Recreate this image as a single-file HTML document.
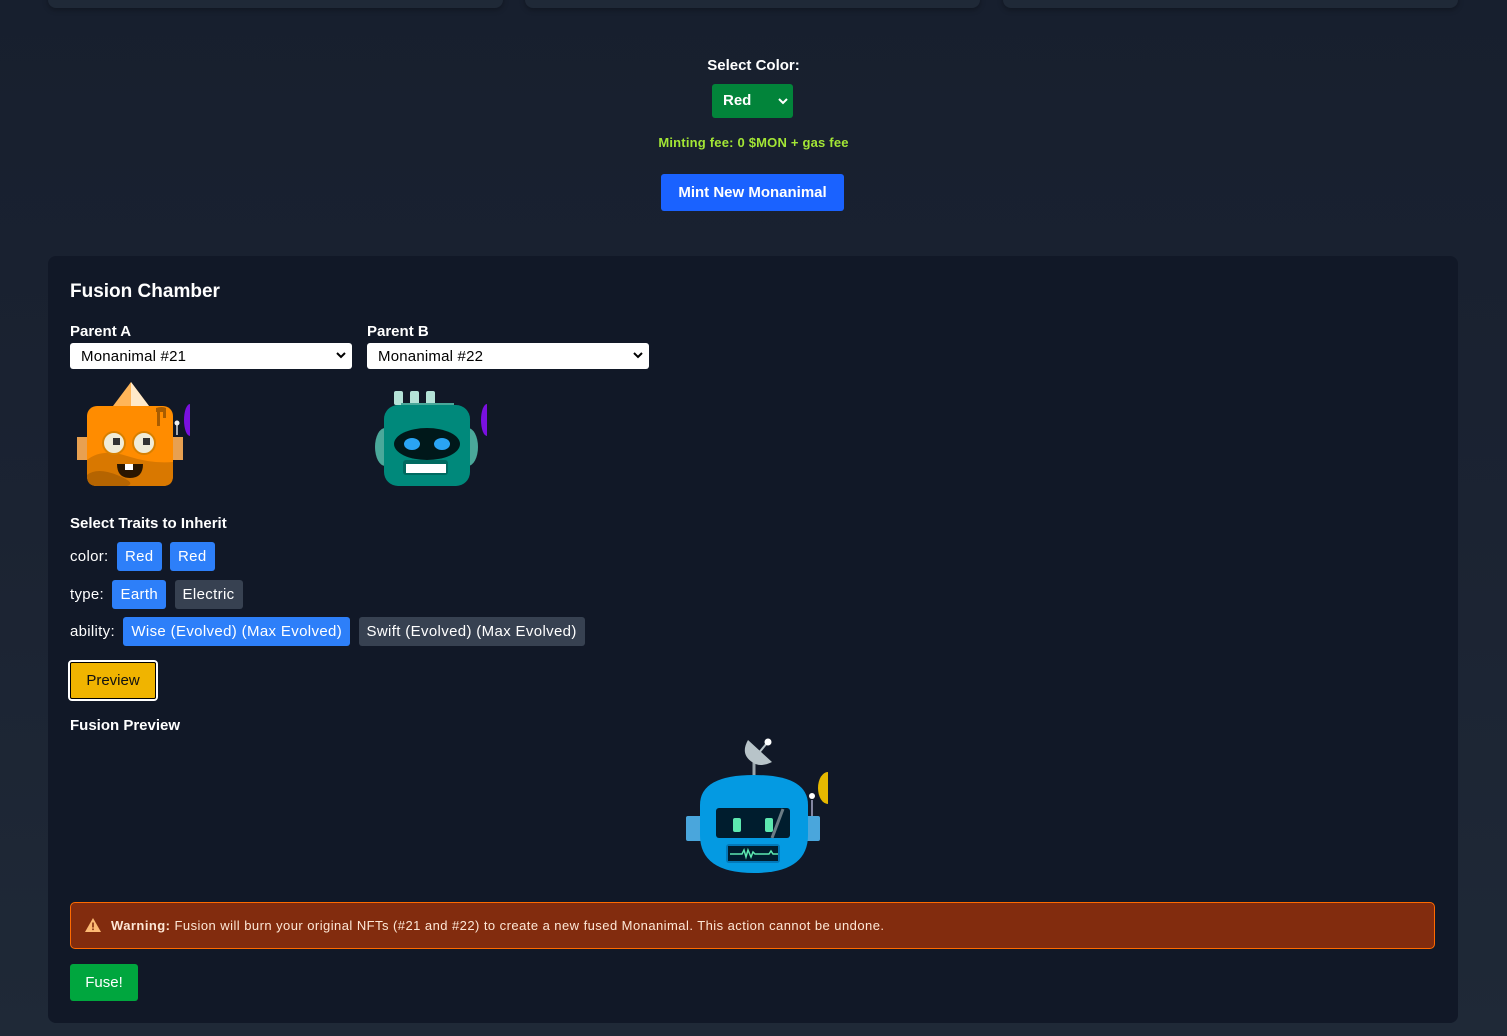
<!DOCTYPE html>
<html><head><meta charset="utf-8"><style>
*{box-sizing:border-box;margin:0;padding:0}
body{width:1507px;height:1036px;overflow:hidden;background:linear-gradient(#171f2e,#1b2332 50%,#1f2937);font-family:"Liberation Sans",Arial,sans-serif;color:#fff;position:relative}
.a{position:absolute}
.card{top:-10px;height:18px;width:455px;background:#1f2937;border-radius:8px;box-shadow:0 2px 6px rgba(0,0,0,.3)}
.panel{left:48px;top:256px;width:1410px;height:767px;background:#111827;border-radius:8px}
.sel{background:#fff;color:#000;border-radius:3px;height:26px;width:282px;font-size:15px;padding:4px 11px;line-height:19px;letter-spacing:.2px}
.sel svg{position:absolute;right:6px;top:9px}
.tag{height:29px;line-height:29px;padding:0 8px;border-radius:3px;font-size:15px;display:inline-block;letter-spacing:.35px}
.b{background:#2d7ff9}.g{background:#374151}
.lab{font-size:15px;line-height:29px;letter-spacing:.3px}
</style></head><body>
<div class="a card" style="left:48px"></div>
<div class="a card" style="left:525px"></div>
<div class="a card" style="left:1003px"></div>

<div class="a" style="left:0;width:1507px;top:57px;text-align:center;font-weight:bold;font-size:15px">Select Color:</div>
<div class="a" style="left:712px;top:84px;width:81px;height:34px;background:#02843a;border-radius:3px;font-weight:bold;font-size:15px;line-height:34px;padding-left:11px">Red<svg class="a" style="right:5px;top:14px" width="10" height="7" viewBox="0 0 10 7"><path d="M1 1l4 4 4-4" stroke="#fff" stroke-width="2" fill="none"/></svg></div>
<div class="a" style="left:0;width:1507px;top:135px;text-align:center;font-weight:bold;font-size:13px;color:#a3e635;letter-spacing:.2px">Minting fee: 0 $MON + gas fee</div>
<div class="a" style="left:661px;top:174px;width:183px;height:37px;background:#1a62ff;border-radius:3px;font-weight:bold;font-size:15px;line-height:37px;text-align:center">Mint New Monanimal</div>

<div class="a panel"></div>
<div class="a" style="left:70px;top:281px;font-weight:bold;font-size:19px">Fusion Chamber</div>
<div class="a" style="left:70px;top:323px;font-weight:bold;font-size:15px">Parent A</div>
<div class="a" style="left:367px;top:323px;font-weight:bold;font-size:15px">Parent B</div>
<div class="a sel" style="left:70px;top:343px">Monanimal #21<svg width="10" height="7" viewBox="0 0 10 7"><path d="M1 1l4 4 4-4" stroke="#000" stroke-width="2" fill="none"/></svg></div>
<div class="a sel" style="left:367px;top:343px">Monanimal #22<svg width="10" height="7" viewBox="0 0 10 7"><path d="M1 1l4 4 4-4" stroke="#000" stroke-width="2" fill="none"/></svg></div>

<svg class="a" style="left:70px;top:380px" width="130" height="110" viewBox="0 0 130 110">
<path d="M43 26L61 2 79 26z" fill="#ffb559"/><path d="M61 2L79 26H61z" fill="#ffe9c9"/>
<rect x="7" y="57" width="12" height="23" fill="#e8a050"/><rect x="101" y="57" width="12" height="23" fill="#e8a050"/>
<line x1="107" y1="55" x2="107" y2="44" stroke="#ddd" stroke-width="1.5"/><circle cx="107" cy="43" r="2.5" fill="#eee"/>
<path d="M120 24a6 16 0 0 0 0 32z" fill="#7a10e0"/>
<rect x="17" y="26" width="86" height="80" rx="10" fill="#ff8c00"/>
<path d="M17 80q15-12 40-4t46 6v14q0 10-10 10H27q-10 0-10-10z" fill="#d97800"/>
<path d="M17 95q10-8 30 0t10 11H27q-10 0-10-10z" fill="#b56400"/>
<path d="M86 28q6-2 10 0v10h-3v-6h-3v14h-3V32h-1z" fill="#a85c00"/>
<circle cx="44" cy="63" r="11" fill="#f0ecd8" stroke="#d98000" stroke-width="2"/><circle cx="74" cy="63" r="11" fill="#f0ecd8" stroke="#d98000" stroke-width="2"/>
<rect x="43" y="58" width="7" height="7" fill="#333"/><rect x="73" y="58" width="7" height="7" fill="#333"/>
<path d="M47 84h26q0 14-13 14t-13-14z" fill="#2a1600"/><rect x="55" y="84" width="8" height="6" fill="#fff"/>
</svg>

<svg class="a" style="left:367px;top:380px" width="130" height="110" viewBox="0 0 130 110">
<rect x="27" y="11" width="9" height="14" rx="2" fill="#b4e2d7"/><rect x="43" y="11" width="9" height="14" rx="2" fill="#b4e2d7"/><rect x="59" y="11" width="9" height="14" rx="2" fill="#b4e2d7"/>
<rect x="34" y="23" width="53" height="4" fill="#4aa89a"/>
<path d="M120 24a6 16 0 0 0 0 32z" fill="#7a10e0"/>
<ellipse cx="18" cy="67" rx="10" ry="19" fill="#4aa89a"/><ellipse cx="101" cy="67" rx="10" ry="19" fill="#4aa89a"/>
<rect x="17" y="25" width="86" height="81" rx="14" fill="#00897b"/>
<ellipse cx="60" cy="64" rx="33" ry="16" fill="#00181a"/>
<ellipse cx="45" cy="64" rx="8" ry="6" fill="#2aa4f4"/><ellipse cx="75" cy="64" rx="8" ry="6" fill="#2aa4f4"/>
<rect x="36" y="80" width="45" height="15" rx="3" fill="#006a60"/><rect x="39" y="84" width="40" height="9" fill="#fff"/>
</svg>

<div class="a" style="left:70px;top:515px;font-weight:bold;font-size:15px">Select Traits to Inherit</div>
<div class="a" style="left:70px;top:542px"><span class="lab">color:</span> <span class="tag b" style="margin-left:4px">Red</span> <span class="tag b" style="margin-left:4px">Red</span></div>
<div class="a" style="left:70px;top:580px"><span class="lab">type:</span> <span class="tag b" style="margin-left:4px">Earth</span> <span class="tag g" style="margin-left:4px">Electric</span></div>
<div class="a" style="left:70px;top:617px"><span class="lab">ability:</span> <span class="tag b" style="margin-left:4px">Wise (Evolved) (Max Evolved)</span> <span class="tag g" style="margin-left:4px">Swift (Evolved) (Max Evolved)</span></div>
<div class="a" style="left:68px;top:660px;width:90px;height:41px;border:2px solid #fff;border-radius:4px;background:#f0b400;outline:1px solid #000;outline-offset:-3px;color:#111;font-size:15px;line-height:37px;text-align:center">Preview</div>
<div class="a" style="left:70px;top:717px;font-weight:bold;font-size:15px">Fusion Preview</div>

<svg class="a" style="left:670px;top:730px" width="170" height="150" viewBox="0 0 170 150">
<line x1="84" y1="28" x2="84" y2="46" stroke="#9aa6ad" stroke-width="3"/>
<path d="M78 10q-8 14 4 22 8 6 20 0z" fill="#b8c4c9"/><line x1="88" y1="24" x2="97" y2="13" stroke="#b8c4c9" stroke-width="2"/><circle cx="98" cy="12" r="3.5" fill="#fff"/>
<path d="M158 42a10 16 0 0 0 0 32z" fill="#e6b800"/>
<line x1="142" y1="70" x2="142" y2="86" stroke="#aac" stroke-width="1.5"/><circle cx="142" cy="66" r="3" fill="#fff"/>
<rect x="16" y="86" width="18" height="25" rx="2" fill="#4aa6dc"/><rect x="134" y="86" width="16" height="25" rx="2" fill="#4aa6dc"/>
<path d="M30 75q0-30 54-30 54 0 54 30v30q0 38-54 38T30 105z" fill="#049ae2"/>
<rect x="46" y="78" width="74" height="30" rx="3" fill="#001d2e"/>
<rect x="63" y="88" width="8" height="14" rx="2" fill="#5de8b0"/><rect x="95" y="88" width="8" height="14" rx="2" fill="#5de8b0"/>
<line x1="113" y1="79" x2="102" y2="108" stroke="#6b7c85" stroke-width="3"/>
<rect x="56" y="114" width="54" height="19" rx="3" fill="#0378b8"/><rect x="58" y="116" width="50" height="15" fill="#001d2e"/>
<path d="M60 124h12l2-4 2 7 2-7 3 7 2-5 2 2h14l2-3 2 3h5" stroke="#5de8b0" stroke-width="1.5" fill="none"/>
</svg>

<div class="a" style="left:70px;top:902px;width:1365px;height:47px;background:#822c0e;border:1px solid #ff6a00;border-radius:5px;font-size:13px;line-height:45px;padding-left:40px;color:#fde7d6;letter-spacing:.45px"><svg class="a" style="left:14px;top:15px" width="16" height="14" viewBox="0 0 16 14"><path d="M8 0L16 14H0z" fill="#fdba74"/><rect x="7.2" y="4.5" width="1.6" height="5" fill="#822c0e"/><rect x="7.2" y="10.5" width="1.6" height="1.6" fill="#822c0e"/></svg><b>Warning:</b> Fusion will burn your original NFTs (#21 and #22) to create a new fused Monanimal. This action cannot be undone.</div>
<div class="a" style="left:70px;top:964px;width:68px;height:37px;background:#00a63e;border-radius:3px;font-size:15px;line-height:37px;text-align:center">Fuse!</div>
</body></html>
